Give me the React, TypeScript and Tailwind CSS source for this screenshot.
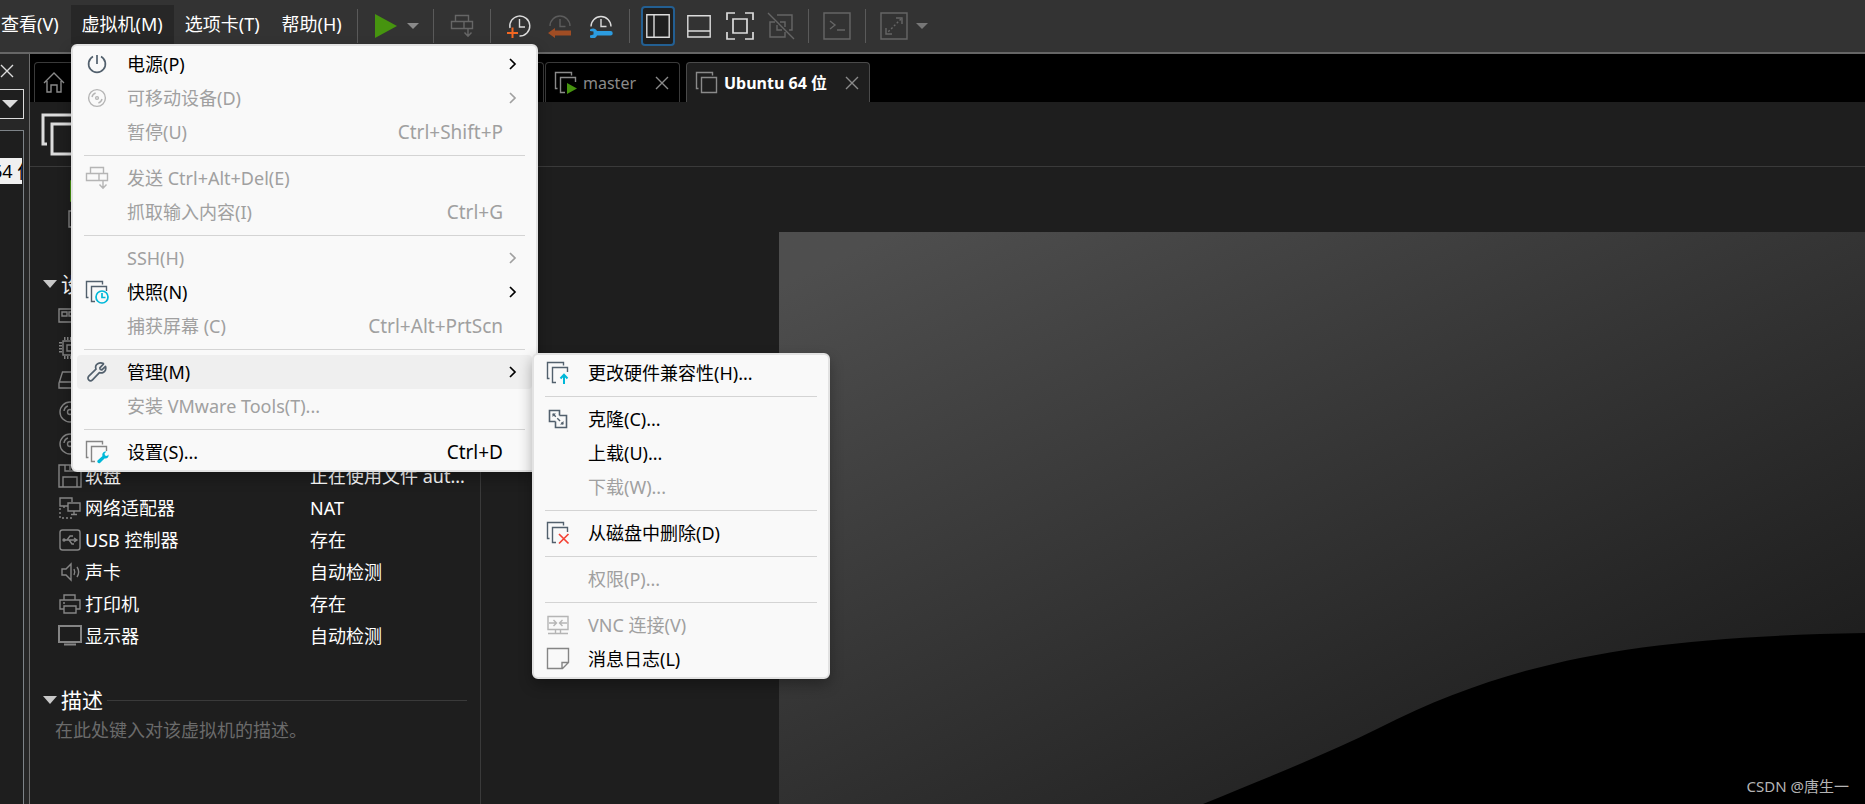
import type { ReactNode } from "react"

type IconProps = { className?: string }

function Svg({ size = 24, className = "", children }: { size?: number; className?: string; children: ReactNode }) {
  return (
    <svg
      width={size}
      height={size}
      viewBox={`0 0 ${size} ${size}`}
      fill="none"
      stroke="currentColor"
      strokeWidth="1.4"
      className={`shrink-0 ${className}`}
      aria-hidden="true"
    >
      {children}
    </svg>
  )
}

function PowerIcon() {
  return (
    <Svg className="text-[#52606d]">
      <path d="M8 4.6a8.4 8.4 0 1 0 8 0M12 3v9" strokeWidth="1.7" />
    </Svg>
  )
}

function DiscIcon({ className }: IconProps) {
  return (
    <Svg className={className}>
      <circle cx="12" cy="12" r="8.4" />
      <circle cx="12" cy="12" r="1.4" />
      <path d="M7 11a5.4 5.4 0 0 1 3.6-4M17 13a5.4 5.4 0 0 1-3.6 4" />
    </Svg>
  )
}

function SendKeysIcon({ className }: IconProps) {
  return (
    <Svg className={className}>
      <path d="M5.5 1.5h13v6h-13zM1.5 7.5h21v7h-21zM14 7.5v7M18 15v7M14.5 18.5 18 22.3l3.5-3.8" />
    </Svg>
  )
}

function Stack({ className = "text-[#52606d]", children }: { className?: string; children?: ReactNode }) {
  return (
    <Svg className={className}>
      <path d="M3.5 17.5h-2v-16h16v3" />
      <path d="M10 21.5H6.5v-15h15V11" />
      {children}
    </Svg>
  )
}

function SnapshotMenuIcon() {
  return (
    <Stack>
      <circle cx="17" cy="17" r="6" className="stroke-[#00b8d9]" strokeWidth="1.7" />
      <path d="M17 13v4.5h3.5" className="stroke-[#00b8d9]" strokeWidth="1.7" />
    </Stack>
  )
}

function WrenchIcon() {
  return (
    <Svg className="text-[#52606d]">
      <path
        d="M18.4 4.2 14.8 7.8l.5 1.6 1.6.5 3.6-3.6c1 2.6-.2 5.4-2.6 6.3-1.3.5-2.4.4-3.5 0l-6.9 7.2c-1.1 1.1-2.8 1.1-3.8.1s-1-2.7.1-3.8l7.2-6.9c-.8-2.2-.1-4.4 1.7-5.5 1.6-1 3.9-1.2 5.7-.1z"
        strokeWidth="1.7"
        strokeLinejoin="round"
      />
    </Svg>
  )
}

function SettingsMenuIcon() {
  return (
    <Stack className="text-[#858585]">
      <path
        d="m12.5 20.5 5-4.5c-.8-2.5 1-5 4-4.5l-2 2 .5 2 2 .5 1.5-1.5c.5 3-1.5 4.5-4 4l-4.5 4.5c-1.5 1-3.5-1-2.5-2.5z"
        className="fill-[#00b8d9] stroke-none"
      />
    </Stack>
  )
}

function UpgradeIcon() {
  return (
    <Stack>
      <path d="M18 23v-9M14.5 17.5 18 13.7l3.5 3.8" className="stroke-[#00b8d9]" strokeWidth="2" />
    </Stack>
  )
}

function CloneIcon() {
  return (
    <Svg className="text-[#52606d]">
      <path d="M9.5 14.5h-6v-11h10v5M9.5 14.5v6h11v-12h-7" strokeWidth="1.6" />
      <path d="M6.5 10V6.5H10zM17.5 14v3.5H14z" className="fill-current stroke-none" />
      <path d="m7 7 10 10" strokeDasharray="4 2" />
    </Svg>
  )
}

function DeleteIcon() {
  return (
    <Stack>
      <path d="m13 13 9.5 9.5M22.5 13 13 22.5" className="stroke-[#f44336]" strokeWidth="1.7" />
    </Stack>
  )
}

function VncIcon() {
  return (
    <Svg className="text-[#b5b5b5]">
      <path d="M2 3.5h20v13H2zM2 20.5h20M9.5 17v3.5M14.5 17v3.5" />
      <path d="M3 10h7M7.5 7l3 3-3 3M21 10h-7M16.5 7l-3 3 3 3" />
    </Svg>
  )
}

function NoteIcon() {
  return (
    <Svg className="text-[#858585]">
      <path d="M1.5 1.5h21v14l-6 6h-15zM16 21.5v-6h6" />
    </Svg>
  )
}

function Chevron({ className = "" }: IconProps) {
  return (
    <Svg size={12} className={className}>
      <path d="m3 1 5 5-5 5" strokeWidth="1.7" />
    </Svg>
  )
}

function Caret({ className = "" }: IconProps) {
  return (
    <svg width="12" height="6" viewBox="0 0 12 6" className={`shrink-0 fill-current ${className}`} aria-hidden="true">
      <path d="M0 0h12L6 6z" />
    </svg>
  )
}

function CloseIcon({ className = "" }: IconProps) {
  return (
    <Svg size={14} className={className}>
      <path d="m1 1 12 12M13 1 1 13" />
    </Svg>
  )
}

type Item = { label: string; icon?: ReactNode; keys?: string; sub?: boolean; off?: boolean; active?: boolean }

const vmMenu: Item[][] = [
  [
    { label: "电源(P)", icon: <PowerIcon />, sub: true },
    { label: "可移动设备(D)", icon: <DiscIcon className="text-[#b5b5b5]" />, sub: true, off: true },
    { label: "暂停(U)", keys: "Ctrl+Shift+P", off: true },
  ],
  [
    { label: "发送 Ctrl+Alt+Del(E)", icon: <SendKeysIcon className="text-[#b5b5b5]" />, off: true },
    { label: "抓取输入内容(I)", keys: "Ctrl+G", off: true },
  ],
  [
    { label: "SSH(H)", sub: true, off: true },
    { label: "快照(N)", icon: <SnapshotMenuIcon />, sub: true },
    { label: "捕获屏幕 (C)", keys: "Ctrl+Alt+PrtScn", off: true },
  ],
  [
    { label: "管理(M)", icon: <WrenchIcon />, sub: true, active: true },
    { label: "安装 VMware Tools(T)...", off: true },
  ],
  [{ label: "设置(S)...", icon: <SettingsMenuIcon />, keys: "Ctrl+D" }],
]

const manageMenu: Item[][] = [
  [{ label: "更改硬件兼容性(H)...", icon: <UpgradeIcon /> }],
  [
    { label: "克隆(C)...", icon: <CloneIcon /> },
    { label: "上载(U)..." },
    { label: "下载(W)...", off: true },
  ],
  [{ label: "从磁盘中删除(D)", icon: <DeleteIcon /> }],
  [{ label: "权限(P)...", off: true }],
  [
    { label: "VNC 连接(V)", icon: <VncIcon />, off: true },
    { label: "消息日志(L)", icon: <NoteIcon /> },
  ],
]

function Menu({ groups, className }: { groups: Item[][]; className: string }) {
  return (
    <div
      role="menu"
      className={`absolute rounded-md border-2 border-[#e2e2e2] bg-[#f9f9f9] py-px shadow-[0_6px_14px_rgba(0,0,0,0.3)] ${className}`}
    >
      {groups.map((group, i) => (
        <div key={i}>
          {i > 0 && <hr className="mx-[11px] mt-[6px] mb-[5px] border-0 border-t border-[#d4d4d4]" />}
          {group.map((item) => (
            <button
              key={item.label}
              type="button"
              role="menuitem"
              disabled={item.off}
              className={`mx-1 flex h-[34px] w-[calc(100%-8px)] items-center rounded pr-[13px] pl-2 text-left ${
                item.active ? "bg-[#efefef]" : ""
              } ${item.off ? "text-[#a0a0a0]" : "text-black"}`}
            >
              <span className="flex w-[42px] shrink-0 items-center">{item.icon}</span>
              <span className="grow whitespace-nowrap">{item.label}</span>
              {item.keys && <span className="mr-4 text-[19px] whitespace-nowrap">{item.keys}</span>}
              {item.sub && <Chevron />}
            </button>
          ))}
        </div>
      ))}
    </div>
  )
}

function DriveIcon() {
  return (
    <>
      <circle cx="12" cy="12" r="10" />
      <circle cx="12" cy="12" r="2.5" />
      <path d="M6 11a6 6 0 0 1 4-5" />
    </>
  )
}

const devices = [
  { icon: <path d="M1 5h22v10h-9v3H1zM4 8h5v4H4zM11 8h5v4h-5z" /> },
  {
    icon: (
      <>
        <path d="M5 5h14v14H5zM9 9h6v6H9z" />
        <path d="M6 2.5h12M6 21.5h12M2.5 6v12M21.5 6v12" strokeWidth="3" strokeDasharray="1.5 1.5" />
      </>
    ),
  },
  { icon: <path d="M4.5 4h15L23 15v5H1v-5zM1 14h22" /> },
  { icon: <DriveIcon /> },
  { icon: <DriveIcon /> },
  {
    name: "软盘",
    value: "正在使用文件 aut...",
    icon: <path d="M1 1h18l4 4v18H1zM7 1v6h10V1M12 1v5M5 23V13h14v10" />,
  },
  {
    name: "网络适配器",
    value: "NAT",
    icon: (
      <>
        <path d="M10 10H2V2h12v4M6 10v2M10 7h12v8H10zM16 15v3M13 18.5h6" />
        <path d="M2 12v10h14" strokeDasharray="2 2" />
      </>
    ),
  },
  {
    name: "USB 控制器",
    value: "存在",
    icon: (
      <>
        <rect x="2" y="2" width="20" height="20" rx="2.5" />
        <path d="M6 12h12M9 12l3-4h3M11 12l3 4h2M16 10l3 2-3 2" />
        <circle cx="6" cy="12" r="1" />
      </>
    ),
  },
  {
    name: "声卡",
    value: "自动检测",
    icon: <path d="M4 9h4l5-5v16l-5-5H4zM16 9c1 2 1 4 0 6M19 7c2 3 2 7 0 10" />,
  },
  {
    name: "打印机",
    value: "存在",
    icon: <path d="M6 8V3h11v5M6 17H2V8h20v9h-4M6 14h12v7H6zM5 11h2" />,
  },
  {
    name: "显示器",
    value: "自动检测",
    icon: <path d="M1 2h22v16H1zM6 20.5h12" strokeWidth="2" />,
  },
]

function Divider() {
  return <span className="h-[34px] w-px shrink-0 bg-[#5a5a5a]" />
}

function Toolbar() {
  return (
    <header className="flex h-[54px] shrink-0 items-start border-b-2 border-[#666] bg-[#333] pt-[5px]">
      <nav className="flex pl-px text-white">
        <button type="button" className="h-[39px] pr-3 pb-0.5 whitespace-nowrap">查看(V)</button>
        <button type="button" className="h-[39px] bg-[#272727] px-[11px] pb-0.5 whitespace-nowrap">虚拟机(M)</button>
        <button type="button" className="h-[39px] px-[11px] pb-0.5 whitespace-nowrap">选项卡(T)</button>
        <button type="button" className="h-[39px] px-[11px] pb-0.5 whitespace-nowrap">帮助(H)</button>
      </nav>
      <div className="ml-1 flex h-[42px] items-center">
        <Divider />
        <button type="button" aria-label="Power on" className="ml-[17px] flex items-center gap-2.5 text-[#8a8a8a]">
          <svg width="22" height="24" viewBox="0 0 22 24" aria-hidden="true">
            <path d="M0 0v24l22-12z" className="fill-[#46940f]" />
          </svg>
          <Caret />
        </button>
        <span className="w-3.5" />
        <Divider />
        <button type="button" aria-label="Send keys" className="mx-4">
          <SendKeysIcon className="text-[#666]" />
        </button>
        <Divider />
        <div className="flex gap-[17px] px-4">
          <button type="button" aria-label="Take snapshot">
            <Svg className="text-[#dcdcdc]">
              <path d="M3 14a10 10 0 1 1 9.5 8" />
              <path d="M12.5 5v8H18" />
              <path d="M0 19h11M5.500 13.500V24" className="stroke-[#f26722]" strokeWidth="2" />
            </Svg>
          </button>
          <button type="button" aria-label="Revert snapshot">
            <Svg className="text-[#5c5c5c]">
              <path d="M2 12a10 10 0 0 1 20 0" />
              <path d="M12 5v7.5h5.5" />
              <path d="M0 19l7-5v2.5h16v5H7V24z" className="fill-[#a04d24] stroke-none" />
            </Svg>
          </button>
          <button type="button" aria-label="Manage snapshots">
            <Svg className="text-[#dcdcdc]">
              <path d="M2 12.5a10 10 0 1 1 20 0" />
              <path d="M12 5v7.5h5.5" />
              <path
                d="M1 15.5c3-2 6-1 7 1.5h13.5a2 2 0 0 1 0 4.5H8c-1 3-4 3.5-7 2v-2l3.5-1v-3L1 17z"
                className="fill-[#2c9ce0] stroke-none"
              />
            </Svg>
          </button>
        </div>
        <Divider />
        <button
          type="button"
          aria-label="Library"
          className="ml-[11px] flex h-10 w-[34px] items-center justify-center rounded border-2 border-[#235f92] bg-[#1f1f1f] text-[#dcdcdc]"
        >
          <Svg>
            <path d="M.8.8h22.4v22.4H.8zM8 1v22" />
          </Svg>
        </button>
        <button type="button" aria-label="Thumbnail bar" className="ml-3 text-[#dcdcdc]">
          <Svg>
            <path d="M.8 1.8h22.4V23H.8zM1 17h22" />
          </Svg>
        </button>
        <button type="button" aria-label="Full screen" className="ml-[15px] text-[#dcdcdc]">
          <Svg size={28}>
            <path d="M1 8V1h8M19 1h8v7M27 20v7h-8M9 27H1v-7M7 7h14v14H7z" strokeWidth="1.7" />
          </Svg>
        </button>
        <button type="button" aria-label="Unity" className="mx-[13px] text-[#666]">
          <Svg size={28}>
            <path d="M1 1l26 26M10 3h15v15h-3M8 10H3v15h15v-5M13 10h5v5M10 13v5h5" />
          </Svg>
        </button>
        <Divider />
        <button type="button" aria-label="Console" className="mx-3.5 text-[#666]">
          <Svg size={28}>
            <path d="M1 1h26v26H1zM7 9l5 4-5 4M14 18h8" />
          </Svg>
        </button>
        <Divider />
        <button type="button" aria-label="Stretch" className="ml-3.5 flex items-center gap-2 text-[#666]">
          <Svg size={28}>
            <path d="M1 1h26v26H1zM16 6h6v6M6 16v6h6" />
            <path d="M21 7 7 21" strokeDasharray="2 2" />
          </Svg>
          <Caret className="text-[#777]" />
        </button>
      </div>
    </header>
  )
}

function Library() {
  return (
    <aside className="flex w-[30px] shrink-0 flex-col overflow-hidden border-r border-[#6e6e6e] bg-[#272727] pt-2.5">
      <button type="button" aria-label="Close library" className="text-[#dcdcdc]">
        <CloseIcon />
      </button>
      <button
        type="button"
        aria-label="Search filter"
        className="mt-[11px] flex h-[30px] w-6 items-center justify-end border border-l-0 border-[#dcdcdc] bg-[#1f1f1f] pr-[5px] text-[#dcdcdc]"
      >
        <svg width="16" height="8" viewBox="0 0 16 8" className="fill-current" aria-hidden="true">
          <path d="M0 0h16L8 8z" />
        </svg>
      </button>
      <div className="mt-[11px] w-6 grow overflow-hidden border-t border-r border-[#7d8388] bg-[#1e1e1e]">
        <div className="mt-[27px] h-[26px] w-[22px] overflow-hidden bg-[#f0f0f0] leading-[26px] whitespace-nowrap text-black">
          <span className="-ml-2">64 位</span>
        </div>
      </div>
    </aside>
  )
}

function Tabs() {
  return (
    <div className="flex h-12 shrink-0 items-end bg-black pl-1">
      <button type="button" aria-label="Home" className="h-10 w-[510px] rounded-t border border-b-0 border-[#3a3a3a] pl-2 text-[#8a8a8a]">
        <Svg>
          <path d="m1 12 10-10 10 10M4 10v11h4v-7h6v7h4V10" />
        </Svg>
      </button>
      <div className="ml-px flex h-10 w-[135px] items-center rounded-t border border-b-0 border-[#3a3a3a] pl-2 text-base text-[#8a8a8a]">
        <Svg>
          <path d="M3.5 17.5h-2v-16h16v3M11 21.5H6.5v-15h15V11" />
          <path d="m13 12 10 5.5L13 23z" className="fill-[#46940f] stroke-none" />
        </Svg>
        <button type="button" className="ml-[5px] grow text-left">master</button>
        <button type="button" aria-label="Close master" className="mr-2.5">
          <CloseIcon />
        </button>
      </div>
      <div className="ml-1.5 flex h-10 w-[184px] items-center rounded-t border border-b-0 border-[#4a4a4a] bg-[#1e1e1e] pl-2 text-base text-[#8a8a8a]">
        <Svg>
          <path d="M3.5 17.5h-2v-16h16v3M6.5 6.5h15v15h-15z" />
        </Svg>
        <button type="button" className="ml-[5px] grow text-left font-bold whitespace-nowrap text-white">Ubuntu 64 位</button>
        <button type="button" aria-label="Close Ubuntu 64 位" className="mr-2.5">
          <CloseIcon />
        </button>
      </div>
    </div>
  )
}

function SectionTitle({ children }: { children: ReactNode }) {
  return (
    <h2 className="flex h-8 items-center gap-1 text-[21px]">
      <svg width="14" height="8" viewBox="0 0 14 8" className="fill-[#c8c8c8]" aria-hidden="true">
        <path d="M0 0h14L7 8z" />
      </svg>
      {children}
      <span className="h-px grow bg-[#3a3a3a]" />
    </h2>
  )
}

function DevicePanel() {
  return (
    <section className="w-[451px] shrink-0 border-r border-[#3a3a3a] px-[13px] text-white">
      <div className="flex h-[101px] flex-col items-start gap-1 pt-3 pl-[25px]">
        <button type="button" aria-label="Power on" className="ml-0.5 flex h-6 items-center">
          <svg width="22" height="22" viewBox="0 0 22 22" aria-hidden="true">
            <path d="M0 0v22l22-11z" className="fill-[#46940f]" />
          </svg>
        </button>
        <button type="button" aria-label="Edit settings" className="flex h-6 items-center text-[#858585]">
          <Svg size={20}>
            <path d="M1 2h12v16H1zM13 7h6M13 12h6" />
          </Svg>
        </button>
      </div>
      <SectionTitle>设备</SectionTitle>
      <table className="ml-[15px]">
        <tbody>
          {devices.map((d, i) => (
            <tr key={i} className="h-8">
              <td className="w-[252px] p-0">
                <span className="flex items-center gap-[3px]">
                  <Svg className="text-[#858585]">{d.icon}</Svg>
                  {d.name}
                </span>
              </td>
              <td className="p-0 whitespace-nowrap">{d.value}</td>
            </tr>
          ))}
        </tbody>
      </table>
      <div className="mt-8">
        <SectionTitle>描述</SectionTitle>
        <input
          type="text"
          aria-label="描述"
          placeholder="在此处键入对该虚拟机的描述。"
          className="ml-3 h-7 w-[400px] bg-transparent outline-none placeholder:text-[#6b6b6b]"
        />
      </div>
    </section>
  )
}

function Screen() {
  return (
    <div className="mt-[65px] ml-[298px] grow bg-linear-155 from-[#4e4e4e] from-5% to-[#161616]">
      <svg width="100%" height="100%" viewBox="0 0 1086 572" preserveAspectRatio="none" aria-hidden="true" className="block">
        <path d="M424 572C490 545 545 523 600 496 740 425 870 405 1086 401V572z" className="fill-black" />
      </svg>
    </div>
  )
}

export default function App() {
  return (
    <div className="relative flex h-screen flex-col overflow-hidden bg-[#1e1e1e] font-['Noto_Sans','Noto_Sans_CJK_SC',sans-serif] text-lg leading-6">
      <Toolbar />
      <div className="flex min-h-0 grow">
        <Library />
        <main className="flex min-w-0 grow flex-col">
          <Tabs />
          <div className="h-[65px] shrink-0 border-b border-[#3a3a3a] pt-[10px] pl-[10px] text-[#dcdcdc]">
            <Svg size={48}>
              <path d="M7 32H3V3h31v5M12 12h32v30H12z" strokeWidth="3" />
            </Svg>
          </div>
          <div className="flex min-h-0 grow">
            <DevicePanel />
            <Screen />
          </div>
        </main>
      </div>
      <Menu groups={vmMenu} className="top-[44px] left-[71px] w-[467px]" />
      <Menu groups={manageMenu} className="top-[353px] left-[532px] w-[298px]" />
      <p className="absolute right-4 bottom-1.5 text-[15px] text-[#b5b5b5]">CSDN @唐生一</p>
    </div>
  )
}
